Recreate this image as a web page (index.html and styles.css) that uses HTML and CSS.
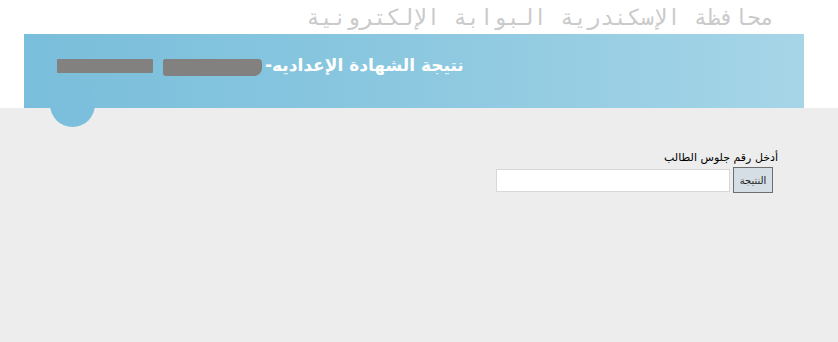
FILE: index.html
```html
<!DOCTYPE html>
<html lang="ar">
<head>
<meta charset="utf-8">
<title>نتيجة الشهادة الإعداديه</title>
<link rel="stylesheet" href="styles.css">
</head>
<body>
<header class="top">
  <div class="site-title" dir="rtl">محافظة الإسكندرية البوابة الإلكترونية</div>
  <div class="banner">
    <h1 class="heading">
      <span class="blob blob-num"></span>
      <span class="blob blob-name"></span>
      <span class="heading-text" dir="rtl">نتيجة الشهادة الإعداديه-</span>
    </h1>
    <span class="circle"></span>
  </div>
</header>
<main class="main">
  <form class="form" dir="rtl">
    <label class="label" for="seat">أدخل رقم جلوس الطالب</label>
    <div class="row">
      <button type="button" class="btn">النتيجة</button>
      <input id="seat" class="input" type="text">
    </div>
  </form>
</main>
</body>
</html>
```
FILE: styles.css
```css
html, body {
  margin: 0;
  padding: 0;
}
body {
  background: #ededed;
  height: 342px;
  overflow: hidden;
  font-family: "DejaVu Sans", sans-serif;
}
.top {
  background: #ffffff;
  height: 108px;
}
.site-title {
  height: 34px;
  box-sizing: border-box;
  padding: 4px 0 0 0;
  margin-right: 64px;
  text-align: right;
  font-family: "DejaVu Sans Mono", monospace;
  font-size: 22.2px;
  line-height: 27px;
  color: #cacaca;
  white-space: nowrap;
}
.banner {
  position: relative;
  margin: 0 34px 0 24px;
  height: 74px;
  background: linear-gradient(90deg, #79bedb 0%, #8cc8e0 50%, #a6d5e7 100%);
}
.heading {
  margin: 0;
  display: flex;
  align-items: center;
  padding: 20px 0 0 33px;
  height: 22px;
  font-size: 17px;
  font-weight: bold;
  color: #ffffff;
}
.blob {
  display: inline-block;
  background: #838080;
}
.blob-num {
  width: 96px;
  height: 14px;
  margin-top: 2px;
  border-radius: 1px;
}
.blob-name {
  width: 99px;
  height: 17px;
  margin: 4px 0 0 10px;
  border-radius: 2px 4px 8px 3px;
}
.heading-text {
  margin-left: 3px;
  white-space: nowrap;
}
.circle {
  position: absolute;
  left: 26px;
  top: 48px;
  width: 45px;
  height: 45px;
  border-radius: 50%;
  background: #7cbfdc;
}
.main {
  background: #ededed;
}
.form {
  display: flex;
  flex-direction: column;
  align-items: flex-start;
  padding: 43px 60px 0 0;
  margin: 0;
}
.label {
  font-size: 11px;
  line-height: 13px;
  color: #000;
  margin-bottom: 3px;
}
.row {
  display: flex;
  align-items: center;
  gap: 3px;
  margin-right: 5px;
}
.btn {
  width: 40px;
  height: 26px;
  padding: 0;
  background: #d5dde5;
  border: 1px solid #6e6e6e;
  font-family: "DejaVu Sans", sans-serif;
  font-size: 10px;
  color: #222;
}
.input {
  width: 234px;
  height: 23px;
  box-sizing: border-box;
  border: 1px solid #d8d8d8;
  background: #fff;
  padding: 0 4px;
}
```
